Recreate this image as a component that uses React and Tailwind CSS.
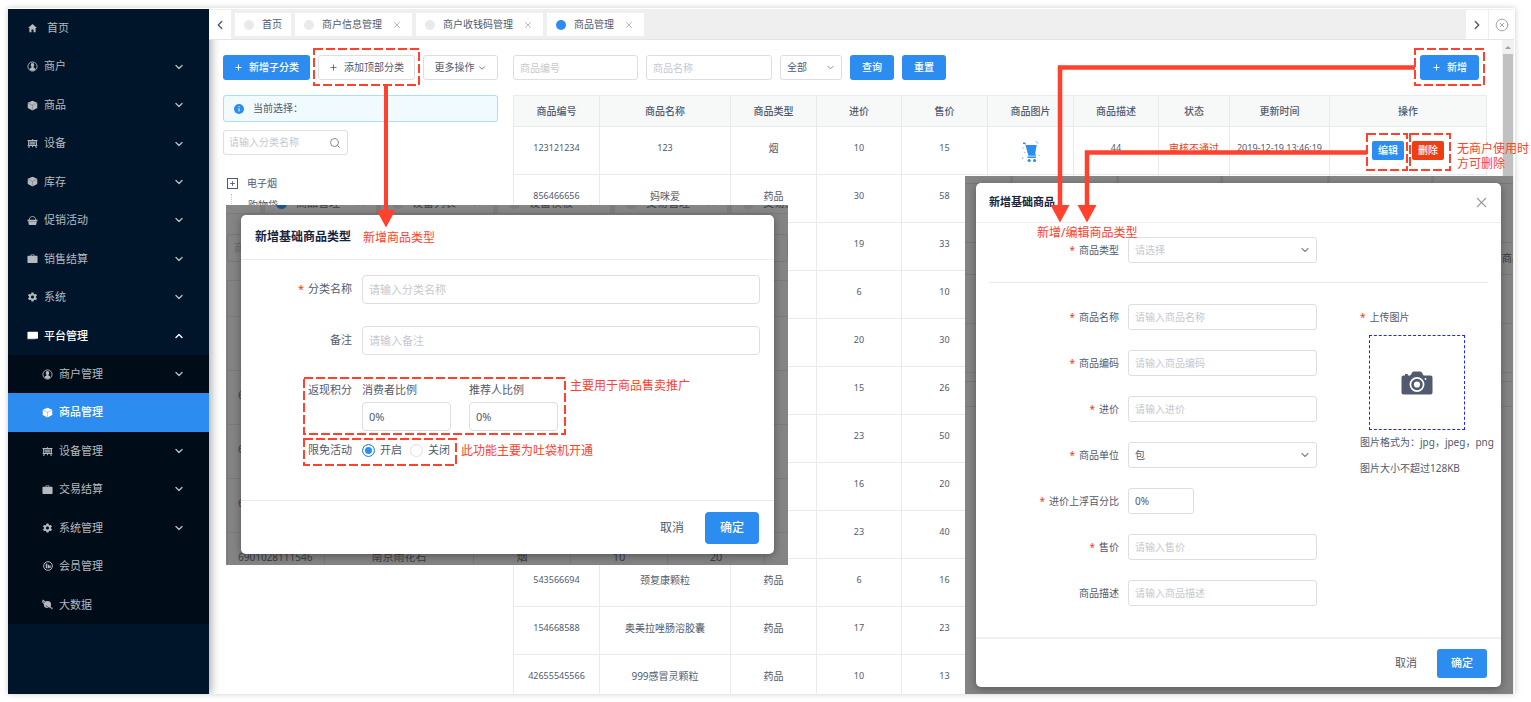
import React from "react";
import { ChevronDown, ChevronLeft, ChevronRight, ChevronUp, CircleX, Plus, Search, X } from "lucide-react";
import { IoMdHome, IoMdSettings } from "react-icons/io";

function UserIcon() {
  return (
    <svg viewBox="0 0 12 12" className="h-[11px] w-[11px]" aria-hidden="true">
      <circle cx="6" cy="6" r="5" fill="none" stroke="currentColor" strokeWidth="1" />
      <path d="M6 2.200c1.200 0 1.900.9 1.900 2.100 0 .9-.4 1.700-.9 2.100v.7c.9.400 1.900.7 2.200 1.500C8.500 9.900 7.300 10.500 6 10.500S3.500 9.900 2.800 8.600c.3-.8 1.300-1.100 2.200-1.500v-.7c-.5-.4-.9-1.200-.9-2.100C4.100 3.100 4.800 2.200 6 2.200z" fill="currentColor" />
    </svg>
  );
}

function CubeIcon() {
  return (
    <svg viewBox="0 0 12 12" className="h-[11px] w-[11px]" aria-hidden="true">
      <path d="M6 .8l5.200 2.300v5.600L6 11.400.8 8.700V3.100z" fill="currentColor" />
      <path d="M1 3.300l5 2.500 5-2.500M6 5.800v5.400" fill="none" stroke="#001529" strokeOpacity="0.350" strokeWidth="0.700" />
    </svg>
  );
}

function BasketIcon() {
  return (
    <svg viewBox="0 0 12 12" className="h-[11px] w-[11px]" aria-hidden="true">
      <path d="M2.500 5.500C2.500 3 4 1.700 6 1.700S9.500 3 9.500 5.500" fill="none" stroke="currentColor" strokeWidth="1" />
      <path d="M.6 5.200h10.800v1.600H.6zM1.300 7.200h9.400l-.8 3.600H2.100z" fill="currentColor" />
    </svg>
  );
}

function BriefcaseIcon() {
  return (
    <svg viewBox="0 0 12 12" className="h-[11px] w-[11px]" aria-hidden="true">
      <path fillRule="evenodd" d="M4 3V1.500h4V3h2.800c.4 0 .7.3.7.7v6.400c0 .4-.3.700-.7.700H1.200c-.4 0-.7-.3-.7-.7V3.700c0-.4.3-.7.7-.7zm.9 0h2.200v-.7H4.900z" fill="currentColor" />
    </svg>
  );
}

function DeviceIcon() {
  return (
    <svg viewBox="0 0 12 12" className="h-[11px] w-[11px]" fill="currentColor" aria-hidden="true">
      <path fillRule="evenodd" d="M.6 2.200h4.800V1.400h1.200v.8h4.800v1h-.6v4.600h.6v1h-1.200l.5 2H9.500l-.4-2H6.500v1.200h-1V8.800H2.900l-.4 2H1.300l.5-2H.6v-1h.6V3.200H.6zM2.400 3.600v3.900h7.200V3.600z" />
      <path d="M2.900 4h6.200v1.300H2.900zM2.900 5.800h6.200v1.300H2.900z" />
    </svg>
  );
}

function MonitorIcon() {
  return (
    <svg viewBox="0 0 12 12" className="h-[11px] w-[11px]" fill="currentColor" aria-hidden="true">
      <rect x="0.500" y="2" width="11.500" height="7.500" rx="0.800" />
      <path d="M0 9.200h9v1H0z" opacity="0.500" />
    </svg>
  );
}

function MemberIcon() {
  return (
    <svg viewBox="0 0 12 12" className="h-[10px] w-[10px]" aria-hidden="true">
      <circle cx="6" cy="6" r="5.200" fill="none" stroke="currentColor" strokeWidth="1.200" />
      <path d="M3.300 3h1.800v5.800H3.300zM5.800 4.500h1.500v4.300H5.800zM7.500 5.500h1.700v3H7.500z" fill="currentColor" />
    </svg>
  );
}

function PlanetIcon() {
  return (
    <svg viewBox="0 0 12 12" className="h-[11px] w-[11px]" aria-hidden="true">
      <circle cx="6" cy="6" r="3.900" fill="currentColor" />
      <path d="M3.500 3.200 1.200 1.500l-.6 1.400L2 5.200M8.800 8.500l2 2 .3-1.200M3 3l6.500 6" fill="none" stroke="currentColor" strokeWidth="1.100" />
      <path d="M4.200 7.200 7.600 9.600" stroke="#000c17" strokeWidth="0.700" />
    </svg>
  );
}

const menu = [
  { label: "首页", Icon: IoMdHome, leaf: true },
  { label: "商户", Icon: UserIcon },
  { label: "商品", Icon: CubeIcon },
  { label: "设备", Icon: DeviceIcon },
  { label: "库存", Icon: CubeIcon },
  { label: "促销活动", Icon: BasketIcon },
  { label: "销售结算", Icon: BriefcaseIcon },
  { label: "系统", Icon: IoMdSettings },
  { label: "平台管理", Icon: MonitorIcon, open: true },
];

const submenu = [
  { label: "商户管理", Icon: UserIcon },
  { label: "商品管理", Icon: CubeIcon, active: true, leaf: true },
  { label: "设备管理", Icon: DeviceIcon },
  { label: "交易结算", Icon: BriefcaseIcon },
  { label: "系统管理", Icon: IoMdSettings },
  { label: "会员管理", Icon: MemberIcon, leaf: true },
  { label: "大数据", Icon: PlanetIcon, leaf: true },
];

function MenuItem({ item, nested }) {
  const { label, Icon, leaf, open, active } = item;
  const tone = active ? "bg-[#2d8cf0] text-white" : open ? "text-white" : "text-[#b6babf]";
  return (
    <a
      href="#"
      className={`flex items-center pr-6 text-[11px] ${nested ? "pl-[34px]" : "pl-[19px]"} ${tone}`}
    >
      <span className="flex w-[11px] justify-center text-[12px]">
        <Icon />
      </span>
      <span className={`flex-1 ${label === "首页" ? "ml-[9px]" : "ml-[6px]"} ${open || active ? "font-medium" : ""}`}>{label}</span>
      {!leaf && (open ? <ChevronUp size={12} strokeWidth={2.8} /> : <ChevronDown size={12} strokeWidth={2.8} />)}
    </a>
  );
}

function Sidebar() {
  return (
    <aside className="relative z-10 w-[201px] shrink-0 bg-[#001529] shadow-[2px_0_9px_rgba(0,0,0,0.35)]">
      <nav className="grid h-[346px] auto-rows-fr">
        {menu.map((item) => (
          <MenuItem key={item.label} item={item} />
        ))}
      </nav>
      <nav className="grid h-[269px] auto-rows-fr bg-[#000c17]">
        {submenu.map((item) => (
          <MenuItem key={item.label} item={item} nested />
        ))}
      </nav>
    </aside>
  );
}

const tabs = [
  { label: "首页", fixed: true },
  { label: "商户信息管理" },
  { label: "商户收钱码管理" },
  { label: "商品管理", active: true },
];

function TabBar() {
  return (
    <div className="relative z-20 flex h-[31px] border-b border-[#e4e4e4] bg-[#efefef] pt-px">
      <button aria-label="向左" className="flex w-[22px] items-center justify-center bg-white text-[#515a6e]">
        <ChevronLeft size={14} strokeWidth={2.4} />
      </button>
      <div className="flex flex-1 gap-1 px-1 py-[3px]">
        {tabs.map((t) => (
          <div key={t.label} className="flex items-center gap-2 bg-white pl-[9px] text-[10px] text-[#515a6e]">
            <span className={`h-[10px] w-[10px] rounded-full ${t.active ? "bg-[#2d8cf0]" : "bg-[#e8eaec]"}`} />
            <span className={t.fixed ? "pr-[9px]" : ""}>{t.label}</span>
            {!t.fixed && (
              <button aria-label={`关闭${t.label}`} className="pr-[10px] pl-[2px] text-[#a6a9ae]">
                <X size={10} strokeWidth={2} />
              </button>
            )}
          </div>
        ))}
      </div>
      <button aria-label="向右" className="flex w-[22px] items-center justify-center bg-white text-[#515a6e]">
        <ChevronRight size={14} strokeWidth={2.4} />
      </button>
      <button aria-label="关闭全部" className="flex w-[26px] items-center justify-center border-l border-[#eeeeee] bg-white text-[#999999]">
        <CircleX size={14} strokeWidth={1.5} />
      </button>
    </div>
  );
}

const primaryBtn = "flex h-[25px] items-center justify-center rounded-[3px] bg-[#2d8cf0] text-[10px] font-medium text-white";
const plainBtn = "flex h-[25px] items-center justify-center rounded-[3px] border border-[#dcdee2] bg-white text-[10px] text-[#515a6e]";
const smallField = "h-[25px] min-w-0 rounded-[3px] border border-[#dcdee2] bg-white px-[6px] text-[10px] text-[#515a6e] placeholder:text-[#c5c8ce]";

function CategoryPanel() {
  return (
    <section className="w-[275px] shrink-0 text-[10px] text-[#515a6e]">
      <div className="flex justify-between">
        <button className={`${primaryBtn} w-[87px] gap-[6px]`}>
          <Plus size={9} strokeWidth={2.5} />
          新增子分类
        </button>
        <button className={`${plainBtn} w-[97px] gap-[6px]`}>
          <Plus size={9} strokeWidth={2.2} />
          添加顶部分类
        </button>
        <button className={`${plainBtn} w-[75px] gap-[2px]`}>
          更多操作
          <ChevronDown size={10} strokeWidth={2} />
        </button>
      </div>
      <div className="mt-[15px] flex h-[27px] items-center gap-[9px] rounded-[3px] border border-[#abdcff] bg-[#f0faff] pl-[10px]">
        <svg viewBox="0 0 10 10" className="h-[10px] w-[10px]" aria-hidden="true">
          <circle cx="5" cy="5" r="5" fill="#2d8cf0" />
          <path d="M4.500 2.300h1v1h-1zM4.500 4.200h1v3.400h-1z" fill="#fff" />
        </svg>
        <span>当前选择：</span>
      </div>
      <label className="mt-2 flex h-[25px] w-[125px] items-center rounded-[3px] border border-[#dcdee2] pr-[6px] pl-[5px]">
        <input aria-label="分类名称搜索" placeholder="请输入分类名称" className="w-full min-w-0 placeholder:text-[#c5c8ce]" />
        <Search size={12} strokeWidth={2} className="shrink-0 text-[#808695]" />
      </label>
      <ul className="mt-[17px] pl-1">
        <li className="flex h-[22px] items-center gap-[9px]">
          <span className="flex h-[11px] w-[11px] items-center justify-center border border-[#515a6e]">
            <Plus size={7} strokeWidth={3} />
          </span>
          电子烟
        </li>
        <li className="ml-[4px] flex h-[22px] items-center border-l border-dotted border-[#c5c8ce] pl-[16px]">购物袋</li>
      </ul>
    </section>
  );
}

function CartPicture() {
  return (
    <svg viewBox="0 0 20 26" className="mx-auto h-[26px] w-5" role="img" aria-label="商品图片">
      <path d="M2 4.500h2.200L5.300 7h10.400l-1.600 9.200 1 .5v1H7.500L6.300 14 4.300 6H2z" fill="#2d8cf0" />
      <path d="M6.500 18.500h8.500v1.500H6.500z" fill="#2d8cf0" />
      <circle cx="8.200" cy="22.500" r="1.600" fill="#2d8cf0" />
      <circle cx="13.600" cy="22.500" r="1.600" fill="#2d8cf0" />
      <g fill="#8cc4fb">
        <path d="M14.500 1.500l1.500 3-1 .5zM1.500 9.500h1.300v1.300H1.500zM3.300 14h1.200v1.200H3.300zM.8 19.500h1.500V21H.8zM17.500 16.500h1.200v1.200h-1.200zM16 4.200h1.300v1.200H16z" />
      </g>
    </svg>
  );
}

const columns = [
  ["商品编号", "w-[86px]"],
  ["商品名称", "w-[131px]"],
  ["商品类型", "w-[86px]"],
  ["进价", "w-[85px]"],
  ["售价", "w-[86px]"],
  ["商品图片", "w-[86px]"],
  ["商品描述", "w-[85px]"],
  ["状态", "w-[71px]"],
  ["更新时间", "w-[100px]"],
  ["操作", "w-[157px]"],
];

const rows = [
  ["123121234", "123", "烟", "10", "15"],
  ["856466656", "妈咪爱", "药品", "30", "58"],
  ["", "", "", "19", "33"],
  ["", "", "", "6", "10"],
  ["", "", "", "20", "30"],
  ["", "", "", "15", "26"],
  ["", "", "", "23", "50"],
  ["", "", "", "16", "20"],
  ["", "", "", "23", "40"],
  ["543566694", "颈复康颗粒", "药品", "6", "16"],
  ["154668588", "奥美拉唑肠溶胶囊", "药品", "17", "23"],
  ["42655545566", "999感冒灵颗粒", "药品", "10", "13"],
];

const cell = "h-12 border border-[#e8eaec] p-0 text-center";

function ProductPanel() {
  return (
    <section className="min-w-0 flex-1">
      <div className="flex gap-2">
        <input aria-label="商品编号" placeholder="商品编号" className={`${smallField} w-[125px]`} />
        <input aria-label="商品名称" placeholder="商品名称" className={`${smallField} w-[126px]`} />
        <div className="grid w-[62px] items-center">
          <select aria-label="状态" className={`${smallField} col-start-1 row-start-1 w-full appearance-none`}>
            <option>全部</option>
          </select>
          <ChevronDown size={11} strokeWidth={2} className="pointer-events-none col-start-1 row-start-1 mr-[6px] justify-self-end text-[#808695]" />
        </div>
        <button className={`${primaryBtn} w-11`}>查询</button>
        <button className={`${primaryBtn} w-11`}>重置</button>
        <button className={`${primaryBtn} mr-2 ml-auto w-[59px] gap-[6px]`}>
          <Plus size={9} strokeWidth={2.5} />
          新增
        </button>
      </div>
      <table className="mt-[15px] w-full table-fixed border-collapse text-[10px] text-[#515a6e]">
        <thead>
          <tr>
            {columns.map(([name, width]) => (
              <th key={name} className={`${width} h-[31px] border border-[#e8eaec] bg-[#f7f9f9] p-0 font-medium`}>
                {name}
              </th>
            ))}
          </tr>
        </thead>
        <tbody>
          {rows.map((r, i) => (
            <tr key={i}>
              {r.map((v, j) => (
                <td key={j} className={`${cell} pb-[5px] ${/^\d+$/.test(v) ? "text-[9px]" : ""}`}>
                  {v}
                </td>
              ))}
              <td className={cell}>{i === 0 && <CartPicture />}</td>
              <td className={`${cell} pb-[5px] text-[9px]`}>{i === 0 && "44"}</td>
              <td className={`${cell} pb-[5px] text-[#ed4014]`}>{i === 0 && "审核不通过"}</td>
              <td className={`${cell} pb-[5px] text-[9px] whitespace-nowrap`}>{i === 0 && "2019-12-19 13:46:19"}</td>
              <td className={cell}>
                {i === 0 && (
                  <div className="flex justify-center gap-2">
                    <button className="h-[19px] w-8 rounded-[2px] bg-[#2d8cf0] font-medium text-white">编辑</button>
                    <button className="h-[19px] w-8 rounded-[2px] bg-[#ed3f14] font-medium text-white">删除</button>
                  </div>
                )}
              </td>
            </tr>
          ))}
        </tbody>
      </table>
    </section>
  );
}

function Required() {
  return <span className="mr-1 text-[#ed4014]">*</span>;
}

const shadeTabs = [
  { label: "商品管理", width: "w-[111px]", dot: "bg-[#1d548c]" },
  { label: "设备列表", width: "w-[112px]", dot: "bg-[#7c7c7c]" },
  { label: "设备模板", width: "w-[112px]", dot: "bg-[#7c7c7c]" },
  { label: "交易管理", width: "w-[112px]", dot: "bg-[#7c7c7c]" },
  { label: "交易结算", width: "w-[112px]", dot: "bg-[#7c7c7c]" },
];

function CategoryBackdrop() {
  return (
    <div className="h-full text-[11px] text-[#3a3f48]">
      <div className="flex h-[9px] items-end gap-[5px] overflow-hidden border-b border-[#7a7a7a] bg-[#7c7c7c]">
        <div className="h-[20px] w-[34px] shrink-0 bg-[#868686]" />
        {shadeTabs.map((t) => (
          <div key={t.label} className={`flex h-[20px] shrink-0 items-center bg-[#868686] pl-[11px] ${t.width}`}>
            <span className={`mr-[9px] h-[11px] w-[11px] rounded-full ${t.dot}`} />
            {t.label}
            <X size={10} strokeWidth={2} className="ml-4 text-[#606060]" />
          </div>
        ))}
      </div>
      <div className="mt-5 ml-px flex h-[28px] items-center rounded-[3px] border border-[#787878] pl-[6px] text-[#6a6a6a]">商</div>
      <table className="mt-[18px] ml-px w-full table-fixed border-collapse">
        <tbody>
          <tr>
            <td className="h-9 w-[97px] border border-[#7a7a7a]" />
            <td className="w-[149px] border border-[#7a7a7a]" />
            <td className="w-[97px] border border-[#7a7a7a]" />
            <td className="w-[97px] border border-[#7a7a7a]" />
            <td className="w-[97px] border border-[#7a7a7a]" />
            <td className="border border-[#7a7a7a]" />
          </tr>
          {[["", "", "", ""], ["6", "", "", ""], ["6", "", "", ""], ["6", "", "", ""], ["6901028111546", "南京雨花石", "烟", "10", "20"]].map((r, i) => (
            <tr key={i}>
              {[0, 1, 2, 3, 4, 5].map((j) => (
                <td
                  key={j}
                  className={`h-[54px] border border-[#7a7a7a] pt-0 pb-1 ${j === 0 ? "pl-[10px] text-[10px]" : "text-center"}`}
                >
                  {r[j]}
                </td>
              ))}
            </tr>
          ))}
        </tbody>
      </table>
    </div>
  );
}

const largeField = "h-[29px] min-w-0 rounded-[4px] border border-[#dcdee2] bg-white px-[6px] text-[11px] text-[#515a6e] placeholder:text-[#c5c8ce]";
const radio = "h-[13px] w-[13px] appearance-none rounded-full border border-[#dcdee2] bg-white checked:border-[#2d8cf0] checked:bg-[#2d8cf0] checked:shadow-[inset_0_0_0_2px_white]";

function CategoryDialog() {
  return (
    <div className="absolute top-[205px] left-[226px] z-30 h-[360px] w-[562px] overflow-hidden bg-[#848484]">
      <CategoryBackdrop />
      <form
        role="dialog"
        aria-label="新增基础商品类型"
        className="absolute top-[10px] left-[15px] flex h-[339px] w-[533px] flex-col rounded-[5px] bg-white text-[11px] text-[#515a6e] shadow-[0_2px_8px_rgba(0,0,0,0.35)]"
      >
        <h2 className="flex h-[45px] items-center border-b border-[#e8eaec] pl-[14px] text-[12px] font-bold text-[#17233d]">新增基础商品类型</h2>
        <div className="grid grid-cols-[111px_1fr] items-center gap-x-[10px] pt-[15px] pr-[14px]">
          <label htmlFor="cat-name" className="text-right">
            <Required />
            分类名称
          </label>
          <input id="cat-name" placeholder="请输入分类名称" className={largeField} />
          <label htmlFor="cat-note" className="mt-[22px] text-right">
            备注
          </label>
          <input id="cat-note" placeholder="请输入备注" className={`${largeField} mt-[22px]`} />
          <span className="mt-[27px] self-start text-right leading-4">返现积分</span>
          <div className="mt-[27px] flex gap-[18px]">
            <label className="flex w-[89px] flex-col gap-1 leading-4">
              消费者比例
              <input defaultValue="0%" className={largeField} />
            </label>
            <label className="flex w-[89px] flex-col gap-1 leading-4">
              推荐人比例
              <input defaultValue="0%" className={largeField} />
            </label>
          </div>
          <span className="mt-[11px] text-right leading-4">限免活动</span>
          <div className="mt-[11px] flex gap-2 leading-4">
            <label className="flex items-center gap-[5px]">
              <input type="radio" name="free" defaultChecked className={radio} />
              开启
            </label>
            <label className="flex items-center gap-[5px]">
              <input type="radio" name="free" className={radio} />
              关闭
            </label>
          </div>
        </div>
        <div className="mt-auto flex h-[54px] items-center justify-end gap-[21px] border-t border-[#e8eaec] pr-[15px] text-[12px]">
          <button type="button">取消</button>
          <button type="button" className="h-8 w-[54px] rounded-[4px] bg-[#2d8cf0] font-medium text-white">
            确定
          </button>
        </div>
      </form>
    </div>
  );
}

const productFields = [
  { label: "商品名称", required: true },
  { label: "商品编码", required: true },
  { label: "进价", required: true },
  { label: "商品单位", required: true, select: "包" },
  { label: "进价上浮百分比", required: true, value: "0%" },
  { label: "售价", required: true },
  { label: "商品描述" },
];

const dialogField = "h-[26px] w-full rounded-[3px] border border-[#dcdee2] bg-white px-[6px] text-[10px] placeholder:text-[#c5c8ce]";

function FieldSelect({ id, value, muted }) {
  return (
    <div className="grid items-center">
      <select id={id} className={`${dialogField} col-start-1 row-start-1 appearance-none ${muted ? "text-[#c5c8ce]" : "text-[#515a6e]"}`}>
        <option>{value}</option>
      </select>
      <ChevronDown size={12} strokeWidth={2.2} className="pointer-events-none col-start-1 row-start-1 mr-[6px] justify-self-end text-[#808695]" />
    </div>
  );
}

function CameraIcon() {
  return (
    <svg viewBox="0 0 32 24" className="h-6 w-8" aria-hidden="true">
      <path d="M2.500 4.500H4V3h2.800v1.500H9C10.500 4 10.600.5 12.800.5h6.400C21.400.5 21.500 4 23 4.500h6.500a2 2 0 0 1 2 2v15a2 2 0 0 1-2 2h-27a2 2 0 0 1-2-2v-15a2 2 0 0 1 2-2z" fill="#515a6e" />
      <circle cx="16" cy="13.500" r="6.600" fill="none" stroke="#fff" strokeWidth="1.700" />
      <circle cx="16" cy="13.500" r="3.100" fill="#fff" />
      <circle cx="24.500" cy="8" r="0.900" fill="#fff" />
    </svg>
  );
}

function ProductDialog() {
  return (
    <div className="absolute top-[176px] left-[965px] z-30 h-[518px] w-[548px] overflow-hidden bg-[#848484]">
      <div className="flex h-2 gap-[3px] border-b border-[#777777] bg-[#7c7c7c]">
        {[46, 104, 103, 106, 103, 80].map((w, i) => (
          <span key={i} className="h-full bg-[#868686]" style={{ width: w }} />
        ))}
      </div>
      <div className="mt-[58px] flex h-[33px] items-center justify-end border-y border-[#787878] text-[10px] text-[#30343c]">
        <span className="w-[11px] overflow-hidden whitespace-nowrap">商品</span>
      </div>
      <div className="h-[49px] border-b border-[#787878]" />
      <div className="h-[49px] border-b border-[#787878]" />
      <div className="mt-2 h-[26px] border-y border-[#787878]" />
      <form
        role="dialog"
        aria-label="新增基础商品"
        className="absolute top-[7px] left-[11px] flex h-[504px] w-[525px] flex-col rounded-[5px] bg-white text-[10px] text-[#515a6e] shadow-[0_2px_8px_rgba(0,0,0,0.35)]"
      >
        <div className="flex h-10 items-center justify-between border-b border-[#eeeeee] pr-[11px] pl-[13px]">
          <h2 className="text-[11px] font-bold text-[#17233d]">新增基础商品</h2>
          <button type="button" aria-label="关闭" className="text-[#999999]">
            <X size={17} strokeWidth={1.5} />
          </button>
        </div>
        <div className="grid grid-cols-[143px_189px] items-center gap-x-[9px] pt-[14px]">
          <label htmlFor="product-type" className="text-right">
            <Required />
            商品类型
          </label>
          <FieldSelect id="product-type" value="请选择" muted />
        </div>
        <hr className="mx-[13px] mt-[19px] border-[#e8eaec]" />
        <div className="mt-[21px] flex">
          <div className="grid grid-cols-[143px_189px] items-center gap-x-[9px] gap-y-5">
            {productFields.map((f, i) => (
              <React.Fragment key={f.label}>
                <label htmlFor={`product-${i}`} className="text-right">
                  {f.required && <Required />}
                  {f.label}
                </label>
                {f.select ? (
                  <FieldSelect id={`product-${i}`} value={f.select} />
                ) : f.value ? (
                  <div className="w-[66px]">
                    <input id={`product-${i}`} defaultValue={f.value} className={dialogField} />
                  </div>
                ) : (
                  <input id={`product-${i}`} placeholder={`请输入${f.label}`} className={dialogField} />
                )}
              </React.Fragment>
            ))}
          </div>
          <div className="ml-[43px] whitespace-nowrap">
            <p className="flex h-[26px] items-center">
              <Required />
              上传图片
            </p>
            <button
              type="button"
              aria-label="上传图片"
              className="mt-[5px] ml-[9px] flex h-[95px] w-[96px] items-center justify-center border border-dashed border-[#2222ff]"
            >
              <CameraIcon />
            </button>
            <p className="mt-1 leading-4">图片格式为：jpg，jpeg，png</p>
            <p className="mt-[10px] leading-4">图片大小不超过128KB</p>
          </div>
        </div>
        <div className="mt-auto flex h-[50px] items-center justify-end gap-5 border-t-2 border-[#f1f1f1] pr-[14px] text-[11px]">
          <button type="button">取消</button>
          <button type="button" className="h-[29px] w-[50px] rounded-[3px] bg-[#2d8cf0] font-medium text-white">
            确定
          </button>
        </div>
      </form>
    </div>
  );
}

function Annotations() {
  return (
    <div className="pointer-events-none absolute inset-0 z-40 overflow-hidden text-[12px] text-[#ff412d]">
      <svg width="1531" height="702" className="absolute top-0 left-0" aria-hidden="true">
        <g fill="none" stroke="#ff412d" strokeWidth="2" strokeDasharray="9 3">
          <rect x="314" y="49" width="105" height="36" />
          <rect x="1415" y="49" width="69" height="36" />
          <rect x="1367" y="134" width="40" height="36" />
          <rect x="1410" y="134" width="40" height="36" />
          <rect x="304" y="378" width="261" height="56" />
          <rect x="304" y="439" width="152" height="26" />
        </g>
        <g fill="none" stroke="#ff412d">
          <path d="M386 86V212" strokeWidth="4" />
          <path d="M1415 67.500H1060V207" strokeWidth="4.500" />
          <path d="M1367 152.500H1087V207" strokeWidth="4.500" />
        </g>
        <path d="M376.500 210h19L386 227.500zM1050.500 205h19L1060 222.500zM1077.500 205h19L1087 222.500z" fill="#ff412d" />
      </svg>
      <span className="absolute top-[229px] left-[363px]">新增商品类型</span>
      <span className="absolute top-[377px] left-[570px]">主要用于商品售卖推广</span>
      <span className="absolute top-[442px] left-[461px]">此功能主要为吐袋机开通</span>
      <span className="absolute top-[224px] left-[1037px]">新增/编辑商品类型</span>
      <span className="absolute top-[141px] left-[1457px] w-[74px] leading-[15px]">无商户使用时方可删除</span>
    </div>
  );
}

export default function App() {
  return (
    <div className="relative h-screen overflow-hidden bg-white pt-[9px] pr-[17px] pb-2 pl-2 font-['Noto_Sans','Noto_Sans_CJK_SC',sans-serif]">
      <div className="flex h-full overflow-hidden bg-white">
        <Sidebar />
        <div className="flex min-w-0 flex-1 flex-col">
          <TabBar />
          <main className="flex min-h-0 flex-1 overflow-hidden">
            <div className="flex min-w-0 flex-1 gap-[15px] pt-[15px] pr-[15px] pl-[14px]">
              <CategoryPanel />
              <ProductPanel />
            </div>
            <div className="w-3 shrink-0 bg-[#f1f1f1] px-px">
              <svg viewBox="0 0 10 14" className="h-[14px] w-[10px]" aria-hidden="true">
                <path d="M5 6 8 9H2z" fill="#a0a0a0" />
              </svg>
              <div className="h-full bg-[#c1c1c1]" />
            </div>
          </main>
        </div>
      </div>
      <div className="pointer-events-none absolute inset-y-2 right-4 left-2 shadow-[0_0_6px_rgba(0,0,0,0.2)]" />
      <CategoryDialog />
      <ProductDialog />
      <Annotations />
    </div>
  );
}
